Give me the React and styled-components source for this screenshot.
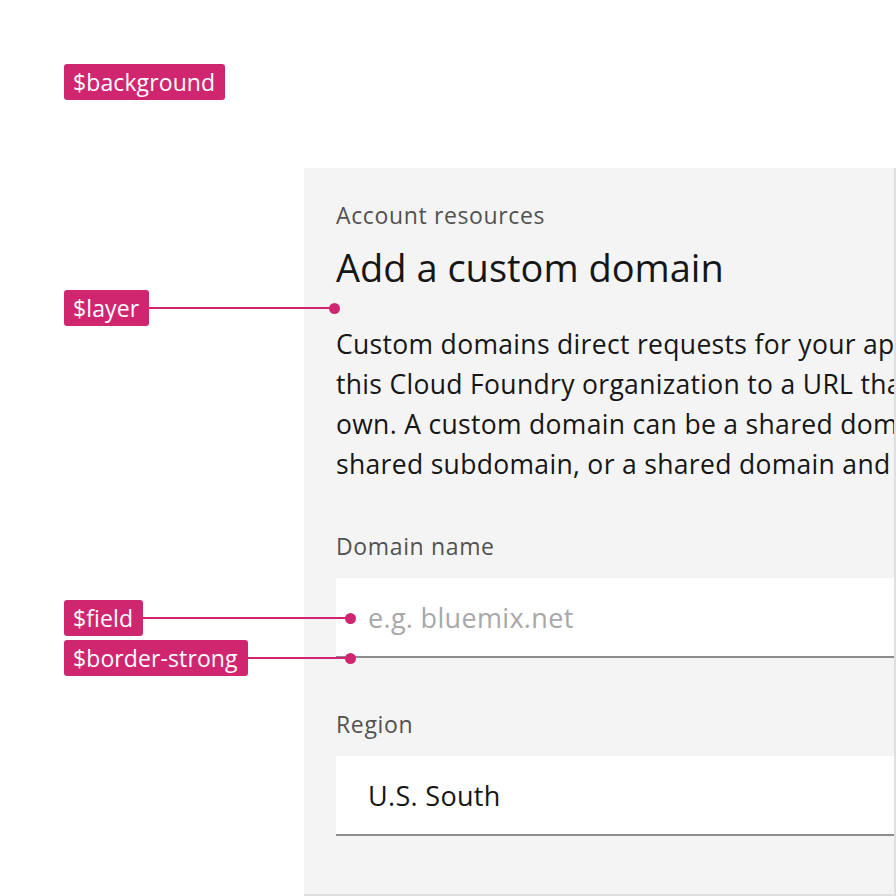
import React from "react";
import styled, { createGlobalStyle } from "styled-components";

const GlobalStyle = createGlobalStyle`
  html, body {
    margin: 0;
    padding: 0;
    background: #ffffff;
  }
  body {
    font-family: "Open Sans", "Noto Sans", "Liberation Sans", sans-serif;
    -webkit-font-smoothing: antialiased;
  }
`;

const MAGENTA = "#d02670";

const Page = styled.div`
  position: relative;
  width: 896px;
  height: 896px;
  box-sizing: border-box;
  overflow: hidden;
  background: #ffffff;
  padding: 168px 0 0 304px;
  font-family: "Open Sans", "Noto Sans", "Liberation Sans", sans-serif;
`;

const Panel = styled.section`
  height: 100%;
  box-sizing: border-box;
  background: #f4f4f4;
  border-right: 2px solid #e0e0e0;
  border-bottom: 2px solid #e0e0e0;
  padding: 31px 0 0 32px;
  overflow: hidden;
  display: flex;
  flex-direction: column;
`;

const Eyebrow = styled.p`
  margin: 0;
  font-size: 23px;
  line-height: 32px;
  letter-spacing: 0.64px;
  color: #525252;
`;

const Heading = styled.h2`
  margin: 8px 0 0;
  font-size: 38px;
  line-height: 56px;
  font-weight: 400;
  color: #161616;
  white-space: nowrap;
`;

const Body = styled.p`
  margin: 29px 0 0;
  font-size: 26.5px;
  line-height: 40px;
  letter-spacing: 0.32px;
  color: #161616;
  white-space: nowrap;
`;

const FormItem = styled.div`
  display: flex;
  flex-direction: column;
  margin-top: ${(p) => p.$gap}px;
`;

const Label = styled.label`
  font-size: 23px;
  line-height: 32px;
  letter-spacing: 0.64px;
  color: #525252;
  margin-bottom: 16px;
`;

const Field = styled.input`
  display: block;
  width: 100%;
  height: 80px;
  box-sizing: border-box;
  margin: 0;
  padding: 0 32px;
  border: none;
  border-bottom: 2px solid #8d8d8d;
  border-radius: 0;
  background: #ffffff;
  font-family: inherit;
  font-size: 27px;
  letter-spacing: 0.32px;
  color: #161616;
  outline: none;

  &::placeholder {
    color: #a8a8a8;
    opacity: 1;
  }
`;

const Annotation = styled.div`
  position: absolute;
  left: 64px;
  top: ${(p) => p.$top}px;
  width: ${(p) => p.$width}px;
  height: 36px;
  display: flex;
  align-items: center;
`;

const Tag = styled.span`
  flex: none;
  height: 36px;
  box-sizing: border-box;
  padding: 0 10px 1px 9px;
  display: flex;
  align-items: center;
  background: ${MAGENTA};
  color: #ffffff;
  font-size: 23px;
  letter-spacing: 0.1px;
  border-radius: 3px;
`;

const Leader = styled.span`
  flex: 1;
  height: 2px;
  background: ${MAGENTA};
`;

const Dot = styled.span`
  flex: none;
  width: 11px;
  height: 11px;
  border-radius: 50%;
  background: ${MAGENTA};
  margin-left: -1px;
`;

const callouts = [
  { label: "$layer", top: 290, dotX: 334 },
  { label: "$field", top: 600, dotX: 350 },
  { label: "$border-strong", top: 640, dotX: 350 },
];

export default function App() {
  return (
    <>
      <GlobalStyle />
      <Page>
        <Panel>
          <Eyebrow>Account resources</Eyebrow>
          <Heading>Add a custom domain</Heading>
          <Body>
            Custom domains direct requests for your apps in
            <br />
            this Cloud Foundry organization to a URL that you
            <br />
            own. A custom domain can be a shared domain, a
            <br />
            shared subdomain, or a shared domain and host.
          </Body>
          <FormItem $gap={46}>
            <Label htmlFor="domain">Domain name</Label>
            <Field id="domain" placeholder="e.g. bluemix.net" />
          </FormItem>
          <FormItem $gap={50}>
            <Label htmlFor="region">Region</Label>
            <Field id="region" defaultValue="U.S. South" readOnly />
          </FormItem>
        </Panel>

        <Annotation $top={64} $width={160}>
          <Tag>$background</Tag>
        </Annotation>
        {callouts.map((c) => (
          <Annotation key={c.label} $top={c.top} $width={c.dotX + 5.5 - 64}>
            <Tag>{c.label}</Tag>
            <Leader />
            <Dot />
          </Annotation>
        ))}
      </Page>
    </>
  );
}
